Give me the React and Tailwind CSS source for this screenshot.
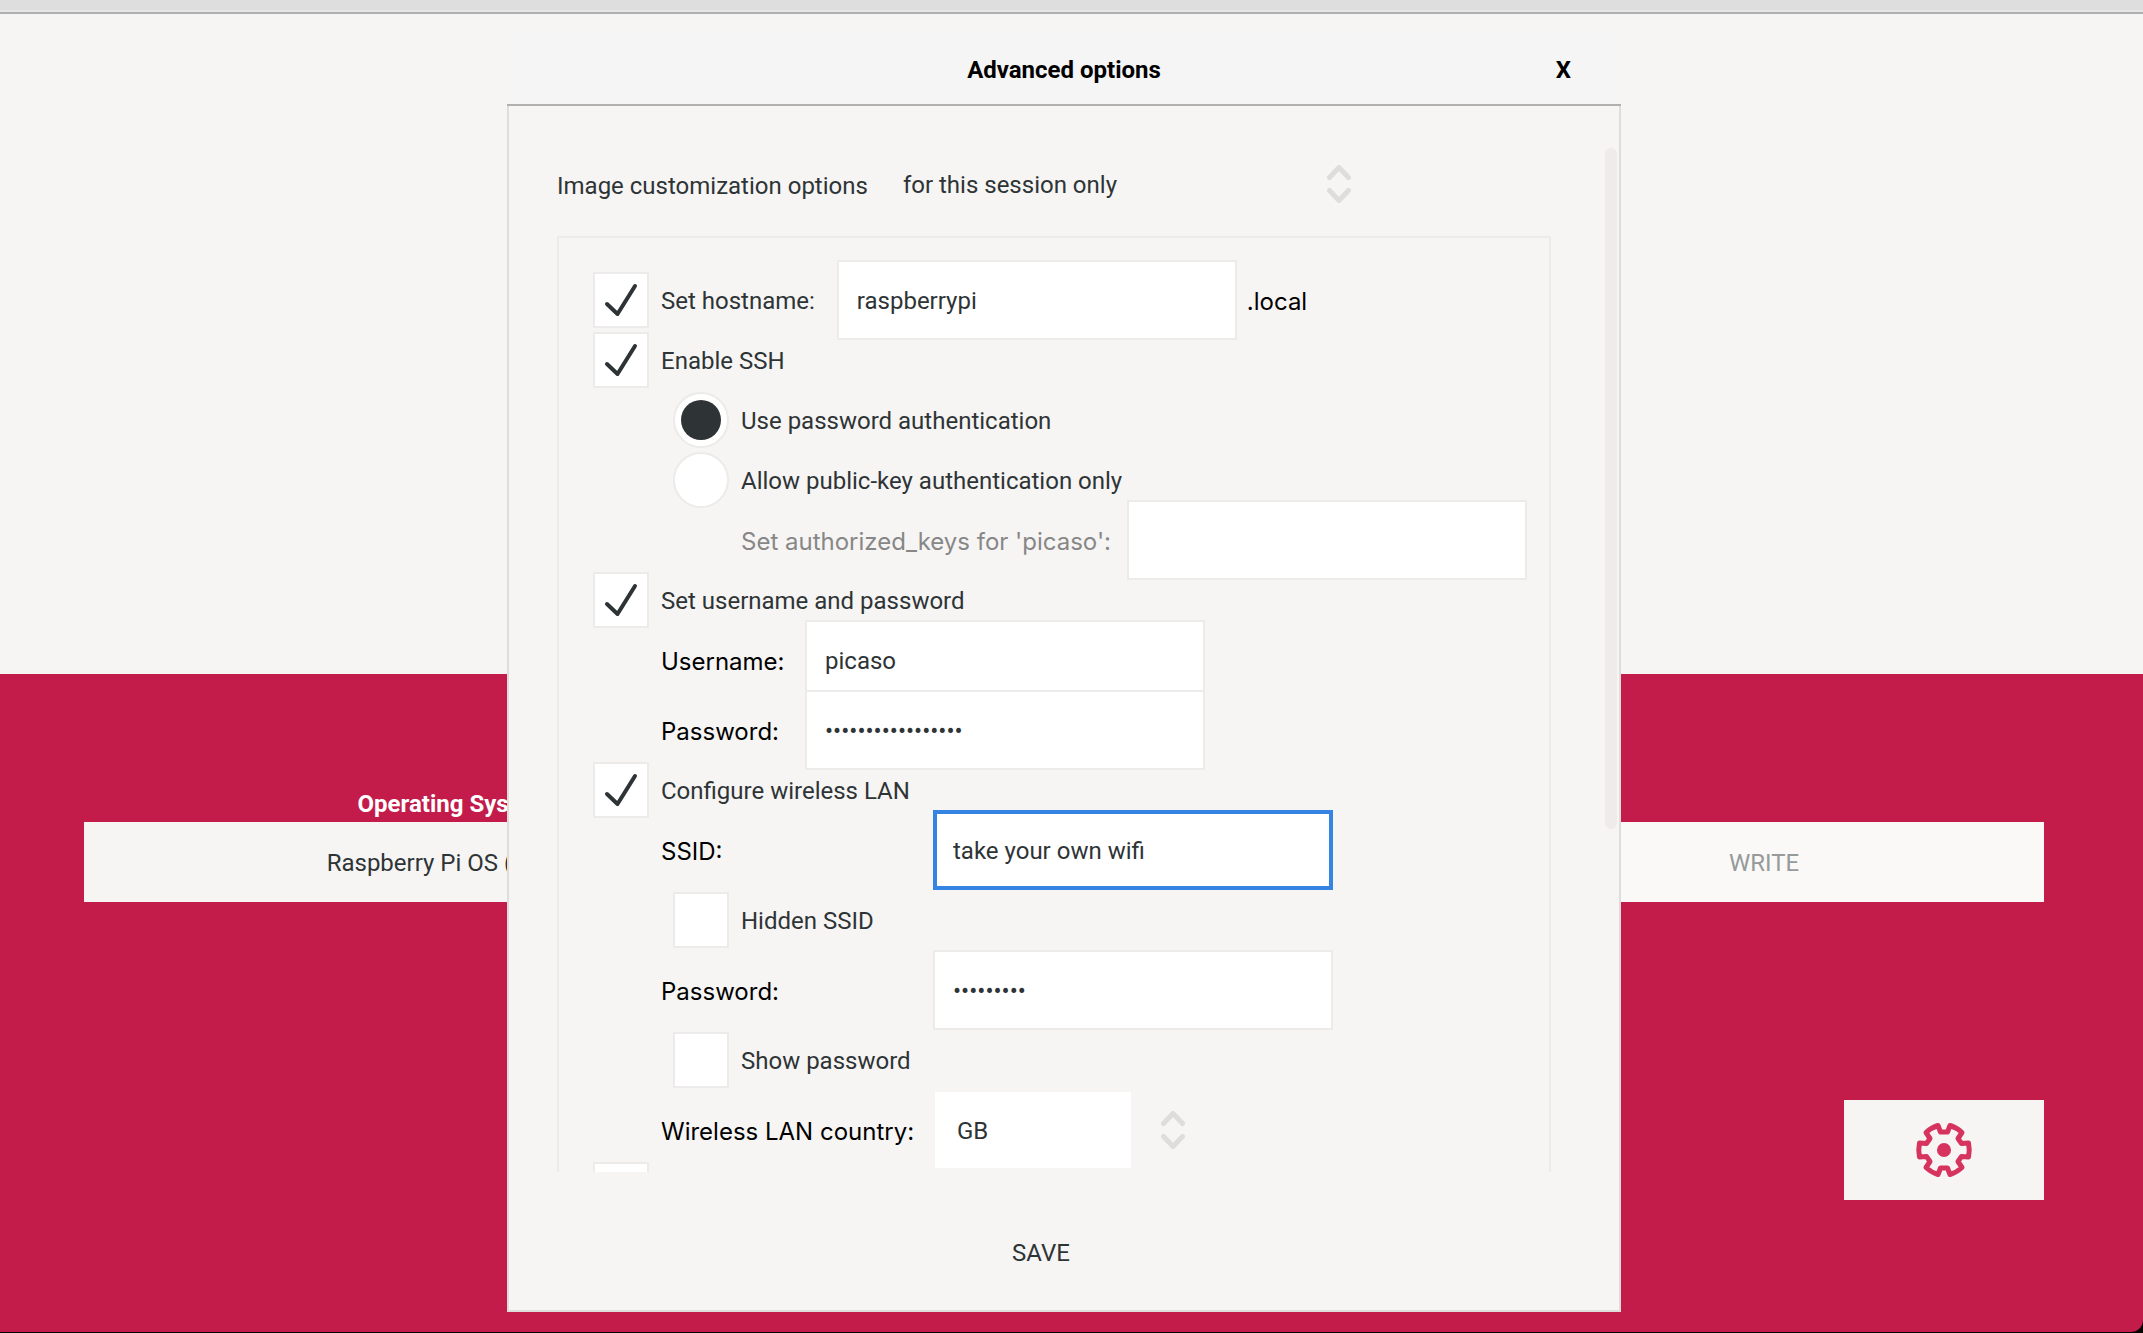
import React from "react";

const inputBase =
  "h-20 w-[400px] shrink-0 bg-white pt-0.5 text-2xl text-[#2e3436] outline-none";
const inputPlain = "border-2 border-[#edebe9] px-[18px]";
const inputActive = "border-4 border-[#3584e4] px-4";

function Field({ active, ...props }) {
  return (
    <input
      className={active ? `${inputBase} ${inputActive}` : `${inputBase} ${inputPlain}`}
      {...props}
    />
  );
}

function Check({ id, label, checked, indent, ...rest }) {
  return (
    <div className={indent ? "flex h-[60px] items-center gap-3 pl-20" : "flex h-[60px] items-center gap-3"}>
      <span className="grid size-14 shrink-0">
        <input
          id={id}
          type="checkbox"
          defaultChecked={checked}
          className="peer col-start-1 row-start-1 size-14 appearance-none border-2 border-[#edebe9] bg-white"
          {...rest}
        />
        <svg
          viewBox="0 0 56 56"
          className="pointer-events-none col-start-1 row-start-1 hidden size-14 peer-checked:block"
          fill="none"
          stroke="#2e3436"
          strokeWidth="4"
          strokeLinecap="round"
          strokeLinejoin="round"
          aria-hidden="true"
        >
          <path d="M14 32 L24.500 42 L42 14" />
        </svg>
      </span>
      {label && <label htmlFor={id} className="pt-0.5 whitespace-nowrap">{label}</label>}
    </div>
  );
}

function Radio({ id, label, checked }) {
  return (
    <div className="flex h-[60px] items-center gap-3 pl-20">
      <span className="grid size-14 shrink-0 place-items-center">
        <input
          id={id}
          type="radio"
          name="ssh-auth"
          defaultChecked={checked}
          className="peer col-start-1 row-start-1 size-14 appearance-none rounded-full border-2 border-[#edebe9] bg-white"
        />
        <span className="pointer-events-none col-start-1 row-start-1 hidden size-10 rounded-full bg-[#2e3436] peer-checked:block" />
      </span>
      <label htmlFor={id} className="pt-0.5 whitespace-nowrap">{label}</label>
    </div>
  );
}

function FieldLabel({ muted, ...props }) {
  return (
    <label
      className={
        muted
          ? "pt-1 font-['Inter',sans-serif] whitespace-nowrap text-[#878787]"
          : "pt-1 font-['Inter',sans-serif] whitespace-nowrap text-black"
      }
      {...props}
    />
  );
}

function Chevrons() {
  return (
    <svg
      viewBox="0 0 24 38"
      className="pointer-events-none h-[38px] w-6 shrink-0"
      fill="none"
      stroke="#deddda"
      strokeWidth="5"
      strokeLinecap="round"
      strokeLinejoin="round"
      aria-hidden="true"
    >
      <path d="M2.500 12.500 L12 2.500 L21.500 12.500 M2.500 25.500 L12 35.500 L21.500 25.500" />
    </svg>
  );
}

function Gear() {
  return (
    <svg viewBox="-30 -30 60 60" className="size-[60px]" aria-hidden="true">
      <g fill="none" stroke="#d6335e" strokeWidth="5" strokeLinejoin="round">
        <path d="M-6 -24.500 L-3.500 -18 L3.500 -18 L6 -24.500 Q12.500 -22.500 18 -17.500 L14 -11.500 L17.500 -6.500 L24.500 -7 Q26 0 24.500 7 L17.500 6.500 L14 11.500 L18 17.500 Q12.500 22.500 6 24.500 L3.500 18 L-3.500 18 L-6 24.500 Q-12.500 22.500 -18 17.500 L-14 11.500 L-17.500 6.500 L-24.500 7 Q-26 0 -24.500 -7 L-17.500 -6.500 L-14 -11.500 L-18 -17.500 Q-12.500 -22.500 -6 -24.500 Z" />
      </g>
      <circle r="7" fill="#d6335e" />
    </svg>
  );
}

function Background() {
  return (
    <div className="flex h-full flex-col">
      <div className="h-3 shrink-0 border-b-2 border-[#e6e6e6] bg-[#dedede]" />
      <div className="h-0.5 shrink-0 bg-[#b0b0b0]" />
      <div className="flex-1 bg-[#f6f5f3]" />
      <main className="flex h-[658px] shrink-0 flex-col rounded-br-xl bg-[#c31b4a] pt-[110px] pr-[99px] pl-[84px]">
        <div className="grid grid-cols-[740fr_620fr_560fr] items-end gap-x-5">
          <div className="flex flex-col">
            <h2 className="pt-0.5 text-center leading-9 font-bold text-white">Operating System</h2>
            <button className="h-20 bg-[#f6f5f3] pt-0.5">Raspberry Pi OS (32-bit)</button>
          </div>
          <div className="flex flex-col">
            <h2 className="pt-0.5 text-center leading-9 font-bold text-white">Storage</h2>
            <button className="h-20 bg-[#f6f5f3] pt-0.5">CHOOSE STORAGE</button>
          </div>
          <button className="h-20 bg-[#faf9f7] pt-0.5 text-[#969a9a]">WRITE</button>
        </div>
        <button
          aria-label="Advanced options"
          className="mt-[198px] grid h-[100px] w-[200px] place-items-center self-end bg-[#f6f5f3]"
        >
          <Gear />
        </button>
      </main>
      <div className="h-px shrink-0" />
    </div>
  );
}

function Dialog() {
  return (
    <section
      role="dialog"
      aria-labelledby="dialog-title"
      className="flex w-full max-w-[1114px] flex-col overflow-hidden"
    >
      <header className="grid h-[72px] shrink-0 grid-cols-[1fr_auto_1fr] items-center border-b-2 border-[#b0b0b0] bg-[#f5f5f5] px-[50px] pt-0.5 font-bold text-black">
        <h1 id="dialog-title" className="col-start-2">Advanced options</h1>
        <button aria-label="Close" className="justify-self-end">X</button>
      </header>
      <div className="flex min-h-0 flex-1 flex-col border-2 border-t-0 border-[#deddda] bg-[#f6f5f3] pt-10">
        <div className="flex min-h-0 flex-1 justify-between overflow-hidden">
          <div className="ml-12 w-[994px]">
            <div className="flex h-[90px] items-center pb-3.5">
              <label htmlFor="persist" className="pt-1">Image customization options</label>
              <div className="ml-[31px] flex items-center">
                <select id="persist" className="w-[428px] appearance-none bg-transparent px-1 pt-0.5 outline-none">
                  <option>for this session only</option>
                </select>
                <Chevrons />
              </div>
            </div>
            <div className="border-2 border-[#ebebe9] px-[34px] py-8">
              <div className="flex items-center">
                <Check id="host" label="Set hostname:" checked />
                <div className="ml-[22px] flex h-[60px] items-center gap-2.5">
                  <Field aria-label="Hostname" defaultValue="raspberrypi" />
                  <span className="pt-1 font-['Inter',sans-serif] text-black">.local</span>
                </div>
              </div>
              <Check id="ssh" label="Enable SSH" checked />
              <Radio id="auth-pass" label="Use password authentication" checked />
              <Radio id="auth-key" label="Allow public-key authentication only" />
              <div className="grid auto-rows-[60px] grid-cols-[386px_400px] items-center pl-[148px]">
                <FieldLabel htmlFor="keys" muted>Set authorized_keys for 'picaso':</FieldLabel>
                <Field id="keys" />
              </div>
              <Check id="user" label="Set username and password" checked />
              <div className="grid auto-rows-[60px] grid-cols-[144px_400px] items-center gap-y-2.5 pl-[68px]">
                <FieldLabel htmlFor="username">Username:</FieldLabel>
                <Field id="username" defaultValue="picaso" />
                <FieldLabel htmlFor="password">Password:</FieldLabel>
                <Field id="password" type="password" defaultValue="aaaaaaaaaaaaaaaaa" />
              </div>
              <Check id="wlan" label="Configure wireless LAN" checked />
              <div className="flex flex-col gap-2.5">
                <div className="grid auto-rows-[60px] grid-cols-[272px_400px] items-center pl-[68px]">
                  <FieldLabel htmlFor="ssid">SSID:</FieldLabel>
                  <Field id="ssid" active defaultValue="take your own wifi" />
                </div>
                <Check id="hidden" label="Hidden SSID" indent />
                <div className="grid auto-rows-[60px] grid-cols-[272px_400px] items-center pl-[68px]">
                  <FieldLabel htmlFor="wlan-pass">Password:</FieldLabel>
                  <Field id="wlan-pass" type="password" defaultValue="aaaaaaaaa" />
                </div>
                <Check id="show" label="Show password" indent />
                <div className="grid auto-rows-[60px] grid-cols-[272px_400px] items-center pl-[68px]">
                  <FieldLabel htmlFor="country">Wireless LAN country:</FieldLabel>
                  <div className="flex items-center gap-[30px] pl-0.5">
                    <select
                      id="country"
                      className="h-[76px] w-[196px] appearance-none bg-white px-[22px] pt-0.5 outline-none"
                    >
                      <option>GB</option>
                    </select>
                    <Chevrons />
                  </div>
                </div>
              </div>
              <Check id="locale" aria-label="Set locale settings" />
            </div>
          </div>
          <div className="mt-0.5 mr-0.5 h-[681px] w-3 rounded-full bg-[#eeebe9]" />
        </div>
        <footer className="flex h-[138px] shrink-0 items-center justify-center pt-6 pr-[46px]">
          <button>SAVE</button>
        </footer>
      </div>
    </section>
  );
}

export default function App() {
  return (
    <div className="relative h-screen overflow-hidden bg-black font-['Roboto',sans-serif] text-2xl text-[#2e3436]">
      <Background />
      <div className="absolute inset-0 flex justify-center pt-[34px] pr-[15px] pb-[21px]">
        <Dialog />
      </div>
    </div>
  );
}
